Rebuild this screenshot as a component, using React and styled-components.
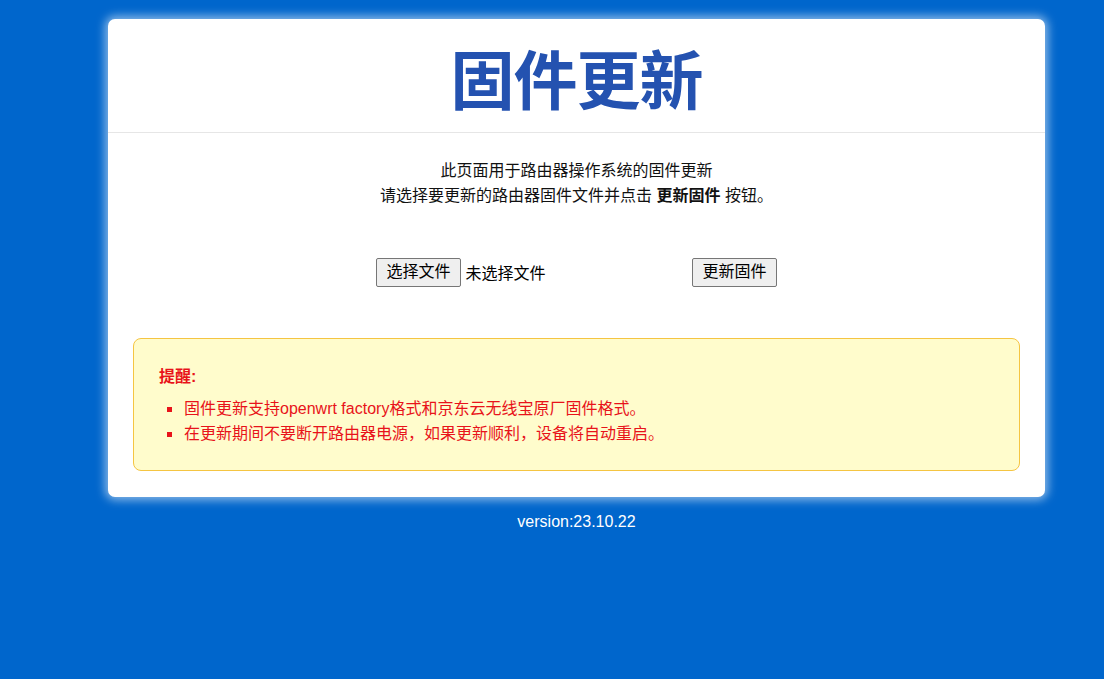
import React from "react";
import styled, { createGlobalStyle } from "styled-components";

const Global = createGlobalStyle`
  html, body {
    margin: 0;
    padding: 0;
    background: #0066cc;
    font-family: "Liberation Sans", "Noto Sans CJK SC", sans-serif;
  }
  body { min-height: 679px; }
`;

const Page = styled.div`
  padding: 19px 0 0 108px;
`;

const Column = styled.div`
  width: 937px;
  display: flex;
  flex-direction: column;
  align-items: center;
`;

const Card = styled.div`
  width: 100%;
  box-sizing: border-box;
  background: #ffffff;
  border-radius: 7px;
  box-shadow: 0 0 10px 3px rgba(255, 255, 255, 0.55);
  padding-bottom: 26px;
`;

const Header = styled.div`
  height: 113px;
  border-bottom: 1px solid #e6e6e6;
  display: flex;
  align-items: center;
  justify-content: center;
`;

const Title = styled.h1`
  margin: 0;
  font-family: "Noto Sans CJK SC", sans-serif;
  font-weight: 700;
  font-size: 64px;
  line-height: 1;
  color: #2452b0;
  letter-spacing: -1px;
`;

const Intro = styled.div`
  padding-top: 25px;
  text-align: center;
  font-size: 16px;
  line-height: 25px;
  color: #111;
`;

const Line = styled.p`
  margin: 0;
`;

const Strong = styled.b`
  font-weight: 700;
`;

const FormRow = styled.div`
  margin-top: 49px;
  display: flex;
  justify-content: center;
  align-items: center;
  height: 30px;
`;

const FileGroup = styled.div`
  width: 316px;
  display: flex;
  align-items: center;
  gap: 5px;
`;

const NativeButton = styled.button`
  height: 29px;
  box-sizing: border-box;
  padding: 0 9px;
  font-family: "Liberation Sans", "Noto Sans CJK SC", sans-serif;
  font-size: 16px;
  line-height: 1;
  color: #000;
  background: #efefef;
  border: 1px solid #767676;
  border-radius: 2px;
  cursor: pointer;
`;

const FileStatus = styled.span`
  font-size: 16px;
  color: #000;
`;

const Alert = styled.div`
  margin: 51px 25px 0;
  padding: 25px 25px 24px;
  background: #fffccc;
  border: 1px solid #f5c542;
  border-radius: 8px;
  color: #e8131a;
`;

const AlertTitle = styled.div`
  font-weight: 700;
  font-size: 16px;
  line-height: 25px;
`;

const List = styled.ul`
  margin: 7px 0 0;
  padding: 0 0 0 25px;
  list-style: square;
  font-size: 16px;
  line-height: 24px;

  li::marker {
    font-size: 18px;
  }
`;

const Version = styled.div`
  margin-top: 16px;
  color: #ffffff;
  font-size: 16px;
  line-height: 18px;
`;

export default function App() {
  return (
    <Page>
      <Global />
      <Column>
        <Card>
          <Header>
            <Title>固件更新</Title>
          </Header>
          <Intro>
            <Line>此页面用于路由器操作系统的固件更新</Line>
            <Line>
              请选择要更新的路由器固件文件并点击 <Strong>更新固件</Strong> 按钮。
            </Line>
          </Intro>
          <FormRow>
            <FileGroup>
              <NativeButton type="button">选择文件</NativeButton>
              <FileStatus>未选择文件</FileStatus>
            </FileGroup>
            <NativeButton type="button">更新固件</NativeButton>
          </FormRow>
          <Alert>
            <AlertTitle>提醒:</AlertTitle>
            <List>
              <li>固件更新支持openwrt factory格式和京东云无线宝原厂固件格式。</li>
              <li>在更新期间不要断开路由器电源，如果更新顺利，设备将自动重启。</li>
            </List>
          </Alert>
        </Card>
        <Version>version:23.10.22</Version>
      </Column>
    </Page>
  );
}
